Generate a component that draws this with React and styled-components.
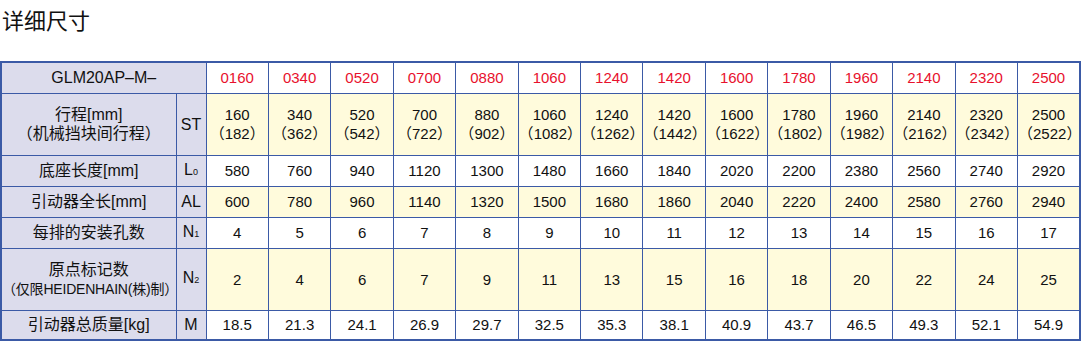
import styled, { createGlobalStyle } from 'styled-components';

const GlobalStyle = createGlobalStyle`
  html, body {
    margin: 0;
    padding: 0;
    background: #ffffff;
  }
  body {
    font-family: "Liberation Sans", "Noto Sans CJK SC", sans-serif;
  }
`;

const Page = styled.div`
  width: 1084px;
  height: 342px;
  overflow: hidden;
`;

const Title = styled.h2`
  margin: 0;
  padding: 8px 0 0 2px;
  height: 61px;
  box-sizing: border-box;
  font-size: 22px;
  line-height: 22px;
  font-weight: normal;
  color: #111;
  font-family: "Noto Sans CJK SC", sans-serif;
`;

const Table = styled.table`
  border-collapse: collapse;
  table-layout: fixed;
  width: 1081px;
  margin-left: 0;
  border: 2px solid #3b5aa6;
  font-size: 15px;
  color: #111;
`;

const Row = styled.tr`
  height: ${({ $h }) => $h}px;
`;

const Cell = styled.td`
  border: 1px solid #3b5aa6;
  padding: 0;
  text-align: center;
  vertical-align: middle;
  line-height: 19px;
  white-space: nowrap;
  background: ${({ $bg }) => $bg || '#ffffff'};
  color: ${({ $red }) => ($red ? '#e8112d' : '#111')};
`;

const Label = styled(Cell)`
  background: #dcdcec;
  font-size: 16px;
`;

const Note = styled.span`
  font-size: 14px;
  letter-spacing: -0.2px;
`;

const Sym = styled(Cell)`
  background: #dcdcec;
  font-size: 16px;
`;

const Sub = styled.sub`
  font-size: 9px;
  vertical-align: baseline;
`;

const codes = ['0160', '0340', '0520', '0700', '0880', '1060', '1240', '1420', '1600', '1780', '1960', '2140', '2320', '2500'];
const strokes = codes.map((c) => Number(c));
const n1 = [4, 5, 6, 7, 8, 9, 10, 11, 12, 13, 14, 15, 16, 17];
const n2 = [2, 4, 6, 7, 9, 11, 13, 15, 16, 18, 20, 22, 24, 25];
const mass = ['18.5', '21.3', '24.1', '26.9', '29.7', '32.5', '35.3', '38.1', '40.9', '43.7', '46.5', '49.3', '52.1', '54.9'];

const YELLOW = '#fffbdc';

export default function App() {
  return (
    <Page>
      <GlobalStyle />
      <Title>详细尺寸</Title>
      <Table>
        <colgroup>
          <col style={{ width: 175 }} />
          <col style={{ width: 30 }} />
          {codes.map((c) => (
            <col key={c} />
          ))}
        </colgroup>
        <tbody>
          <Row $h={31}>
            <Label colSpan={2}>GLM20AP–M–</Label>
            {codes.map((c) => (
              <Cell key={c} $red>{c}</Cell>
            ))}
          </Row>
          <Row $h={62}>
            <Label>
              行程[mm]
              <br />
              （机械挡块间行程）
            </Label>
            <Sym>ST</Sym>
            {strokes.map((s) => (
              <Cell key={s} $bg={YELLOW}>
                {s}
                <br />（{s + 22}）
              </Cell>
            ))}
          </Row>
          <Row $h={31}>
            <Label>底座长度[mm]</Label>
            <Sym>
              L<Sub>0</Sub>
            </Sym>
            {strokes.map((s) => (
              <Cell key={s}>{s + 420}</Cell>
            ))}
          </Row>
          <Row $h={31}>
            <Label>引动器全长[mm]</Label>
            <Sym>AL</Sym>
            {strokes.map((s) => (
              <Cell key={s} $bg={YELLOW}>{s + 440}</Cell>
            ))}
          </Row>
          <Row $h={31}>
            <Label>每排的安装孔数</Label>
            <Sym>
              N<Sub>1</Sub>
            </Sym>
            {n1.map((n) => (
              <Cell key={n}>{n}</Cell>
            ))}
          </Row>
          <Row $h={62}>
            <Label>
              原点标记数
              <br />
              <Note>（仅限HEIDENHAIN(株)制）</Note>
            </Label>
            <Sym>
              N<Sub>2</Sub>
            </Sym>
            {n2.map((n) => (
              <Cell key={n} $bg={YELLOW}>{n}</Cell>
            ))}
          </Row>
          <Row $h={30}>
            <Label>引动器总质量[kg]</Label>
            <Sym>M</Sym>
            {mass.map((m) => (
              <Cell key={m}>{m}</Cell>
            ))}
          </Row>
        </tbody>
      </Table>
    </Page>
  );
}
